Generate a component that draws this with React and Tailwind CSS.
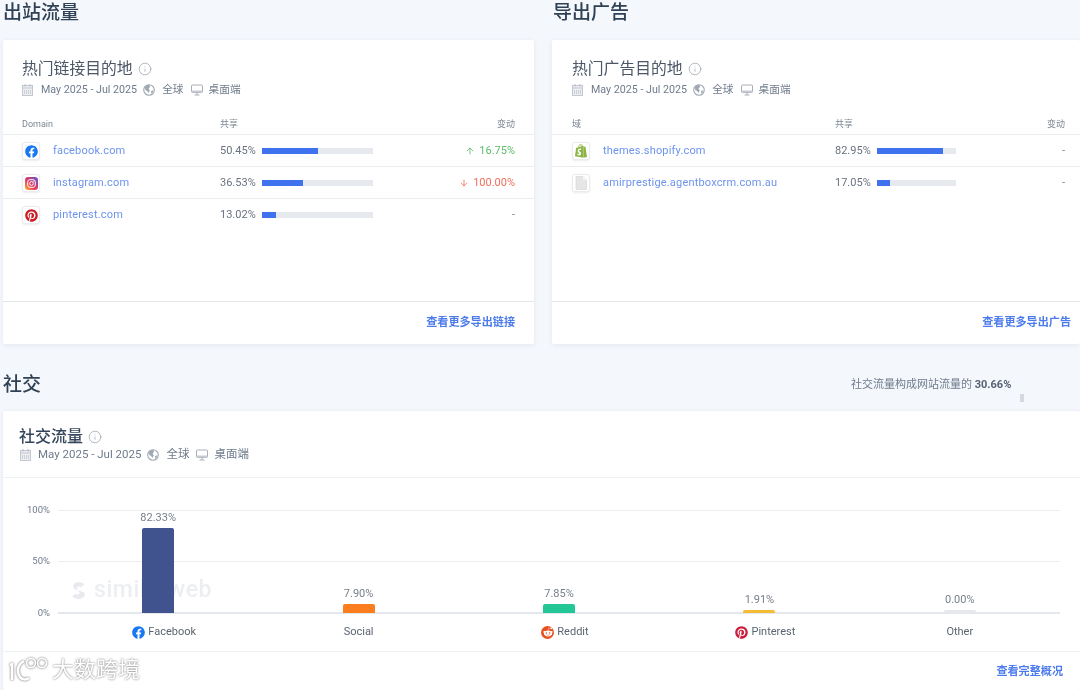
import React from 'react'
import { ArrowDown, ArrowUp, Info } from 'lucide-react'
import { FaFacebook, FaPinterest, FaRedditAlien, FaShopify } from 'react-icons/fa'

const font = { fontFamily: '"Roboto", "Noto Sans CJK SC", sans-serif' }

function InstagramIcon() {
  return (
    <svg width="13" height="13" viewBox="0 0 24 24">
      <defs>
        <linearGradient id="ig" x1="0" y1="1" x2="1" y2="0">
          <stop offset="0" stopColor="#fdb32b" />
          <stop offset="0.45" stopColor="#e8365e" />
          <stop offset="1" stopColor="#5b51d8" />
        </linearGradient>
      </defs>
      <rect width="24" height="24" rx="6" fill="url(#ig)" />
      <rect x="5" y="5" width="14" height="14" rx="4" fill="none" stroke="#fff" strokeWidth="1.8" />
      <circle cx="12" cy="12" r="3.4" fill="none" stroke="#fff" strokeWidth="1.8" />
      <circle cx="16.2" cy="7.8" r="1" fill="#fff" />
    </svg>
  )
}

function FileIcon() {
  return (
    <svg width="12" height="14" viewBox="0 0 12 14">
      <path d="M1 0.5h7l3.5 3.5v9.5h-10.500z" fill="#e6e6e6" stroke="#d4d4d4" strokeWidth="0.6" />
      <path d="M8 0.500v3.500h3.500z" fill="#f5f5f5" />
    </svg>
  )
}

function CalendarIcon() {
  return (
    <svg width="11" height="12" viewBox="0 0 11 12" className="shrink-0">
      <rect x="0.500" y="1.500" width="10" height="10" fill="#eceef1" stroke="#c3c8d0" />
      <path d="M0.500 4h10" stroke="#c3c8d0" />
      <path d="M3 0v2.500M8 0v2.500" stroke="#b4bbc6" />
      <path d="M2.500 6v4M4.500 6v4M6.500 6v4M8.500 6v4" stroke="#c3c8d0" strokeWidth="0.8" />
    </svg>
  )
}

function GlobeIcon() {
  return (
    <svg width="12" height="12" viewBox="0 0 12 12" className="shrink-0">
      <circle cx="6" cy="6" r="5.300" fill="#fff" stroke="#a0a8b3" strokeWidth="1.100" />
      <path d="M2 3c1-1.500 3-2.300 4.500-2.200L7 3 5.500 4.500 6.800 6.500 5.500 9 4.200 7 2.200 6zM8 7l2.300-.800c0 1.500-.7 2.800-1.800 3.700z" fill="#a0a8b3" />
    </svg>
  )
}

function MonitorIcon() {
  return (
    <svg width="12" height="12" viewBox="0 0 12 12" className="shrink-0">
      <rect x="0.500" y="1" width="11" height="7.500" rx="1" fill="#fff" stroke="#a8afba" />
      <rect x="1" y="6.500" width="10" height="2" fill="#c7ccd3" />
      <path d="M6 8.500v2.500M3.500 11h5" stroke="#a8afba" />
    </svg>
  )
}

function IconBox({ children }) {
  return (
    <div className="w-[18px] h-[18px] rounded-[3px] bg-white border border-[#e9ebef] shadow-[0_1px_2px_rgba(0,0,0,0.08)] flex items-center justify-center shrink-0">
      {children}
    </div>
  )
}

function MetaRow({ large }) {
  return (
    <div className={`flex items-center text-[#6f7b8c] ${large ? 'ml-[1px] text-[11.500px]' : 'text-[10.700px]'}`}>
      <CalendarIcon />
      <span className={large ? 'ml-[7px]' : 'ml-[8px]'}>May 2025 - Jul 2025</span>
      <span className={large ? 'ml-[6px]' : 'ml-[6px]'}><GlobeIcon /></span>
      <span className="ml-[7px]">全球</span>
      <span className="ml-[7px]"><MonitorIcon /></span>
      <span className={large ? 'ml-[6px]' : 'ml-[6px]'}>桌面端</span>
    </div>
  )
}

function Title({ children, className }) {
  return (
    <div className={`flex items-center ${className}`}>
      {children}
      <Info size={14} strokeWidth={1.1} className="ml-[5px] text-[#8d96a3]" />
    </div>
  )
}

function Row({ icon, domain, share, pct, change, shareX, barW, left, right }) {
  return (
    <div className={`h-[32px] pt-[1px] flex items-center border-t border-[#e9ecf1] ${left} ${right} text-[11px]`}>
      <IconBox>{icon}</IconBox>
      <span className="ml-[13px] text-[#6d93ee] tracking-[0.18px]">{domain}</span>
      <div className={`absolute flex items-center ${shareX}`}>
        <span className="w-[42px] text-[#68727f]">{share}</span>
        <div className={`h-[6px] bg-[#e6e9ee] ${barW}`}>
          <div className="h-full bg-[#3f72ee]" style={{ width: `${pct}%` }} />
        </div>
      </div>
      <div className="ml-auto">{change}</div>
    </div>
  )
}

function Dash() {
  return <span className="text-[#7b8592]">-</span>
}

function Delta({ up, value }) {
  const Arrow = up ? ArrowUp : ArrowDown
  return (
    <span className={`flex items-center gap-[4px] ${up ? 'text-[#5dbb6a]' : 'text-[#ef6f5c]'}`}>
      <Arrow size={10} strokeWidth={2} />
      {value}
    </span>
  )
}

function LinkCard({ title, domainLabel, left, right, shareX, barW, rows, link, linkPad }) {
  return (
    <div className="relative h-[304px] bg-white rounded-[2px] shadow-[0_1px_5px_rgba(40,60,90,0.08)] flex flex-col">
      <div className={`${left} pt-[18px]`}>
        <Title className="text-[15.800px] leading-[22px] text-[#4b5666]">{title}</Title>
        <div className="mt-[2px]"><MetaRow /></div>
      </div>
      <div className={`relative mt-[17px] h-[19px] flex items-center ${left} ${right} text-[9px] text-[#7c8693]`}>
        <span>{domainLabel}</span>
        <span className={`absolute ${shareX}`}>共享</span>
        <span className="ml-auto">变动</span>
      </div>
      <div className="relative">
        {rows.map((r) => (
          <Row key={r.domain} {...r} shareX={shareX} barW={barW} left={left} right={right} />
        ))}
      </div>
      <div className={`mt-auto h-[43px] border-t border-[#e3e6eb] flex items-center justify-end ${linkPad} text-[11.100px] font-semibold text-[#4c7bec]`}>
        {link}
      </div>
    </div>
  )
}

const bars = [
  { name: 'Facebook', value: '82.33%', h: 'h-[85px]', color: 'bg-[#41538e]', icon: <FaFacebook size={13} className="text-[#1877f2]" /> },
  { name: 'Social', value: '7.90%', h: 'h-[9px]', color: 'bg-[#fb7d1e]' },
  {
    name: 'Reddit',
    value: '7.85%',
    h: 'h-[9px]',
    color: 'bg-[#22c795]',
    icon: (
      <span className="w-[13px] h-[13px] rounded-full bg-[#e8501f] flex items-center justify-center">
        <FaRedditAlien size={10} className="text-white" />
      </span>
    ),
  },
  { name: 'Pinterest', value: '1.91%', h: 'h-[3px]', color: 'bg-[#f4bb35]', icon: <FaPinterest size={13} className="text-[#cb1f3d]" /> },
  { name: 'Other', value: '0.00%', h: 'h-[3px]', color: 'bg-[#e6e8ee]' },
]

function Chart() {
  return (
    <div className="relative h-[173px] pl-[55px] pr-[20px]">
      {/* grid lines sit behind the bars */}
      <div className="absolute inset-x-0 top-[32px] h-[103px] flex flex-col justify-between text-[9.500px] text-[#6f7b8c]">
        {['100%', '50%', '0%'].map((t, i) => (
          <div key={t} className="h-0 flex items-center pr-[20px]">
            <span className="w-[47px] text-right shrink-0">{t}</span>
            <div className={`ml-[8px] flex-1 ${i === 2 ? 'h-[2px] bg-[#e4e7ec]' : 'h-px bg-[#eceef2]'}`} />
          </div>
        ))}
      </div>
      <div className="absolute left-[67px] top-[95px] flex items-center gap-[7px] text-[#eceef1] text-[23px] font-medium tracking-[0.55px]">
        <svg width="17" height="17" viewBox="0 0 16 16">
          <path d="M8 0a8 8 0 0 1 5.500 2.200L10.500 5c-1.500-1-3.500-.8-4 .3-.4 1 .4 1.700 2 2.700-2.500-.3-5.500-1.500-5.500-4C3 1.500 5.500 0 8 0z" fill="#e8eaee" />
          <path d="M8 16a8 8 0 0 1-6-2.700L5 11c1.500 1 3.200.8 3.800 0 .5-.8 0-1.700-1.500-2.500 3.700 0 6.700 1 6.700 3.500 0 2.500-3.500 4-6 4z" fill="#e8eaee" />
        </svg>
        similarweb
      </div>
      <div className="relative grid grid-cols-5 h-full">
        {bars.map((b) => (
          <div key={b.name} className="flex flex-col items-center">
            <div className="h-[135px] flex flex-col items-center justify-end">
              <span className="text-[11px] leading-[12px] mb-[4px] text-[#767f8b]">{b.value}</span>
              <div className={`w-[32px] rounded-t-[2px] ${b.h} ${b.color}`} />
            </div>
            <div className={`mt-[12px] flex items-center gap-[3px] text-[11px] leading-[14px] text-[#5a6470] ${b.icon ? 'ml-[12px]' : ''}`}>
              {b.icon}
              {b.name}
            </div>
          </div>
        ))}
      </div>
    </div>
  )
}

export default function App() {
  const leftRows = [
    { icon: <FaFacebook size={13} className="text-[#1877f2]" />, domain: 'facebook.com', share: '50.45%', pct: 50.45, change: <Delta up value="16.75%" /> },
    { icon: <InstagramIcon />, domain: 'instagram.com', share: '36.53%', pct: 36.53, change: <Delta value="100.00%" /> },
    { icon: <FaPinterest size={13} className="text-[#cb1f27]" />, domain: 'pinterest.com', share: '13.02%', pct: 13.02, change: <Dash /> },
  ]
  const rightRows = [
    { icon: <FaShopify size={14} className="text-[#8db543]" />, domain: 'themes.shopify.com', share: '82.95%', pct: 82.95, change: <Dash /> },
    { icon: <FileIcon />, domain: 'amirprestige.agentboxcrm.com.au', share: '17.05%', pct: 17.05, change: <Dash /> },
  ]

  return (
    <div className="relative w-[1080px] h-[690px] overflow-hidden bg-[#f4f7fc] pl-[3px] blur-[0.4px]" style={font}>
      <div className="flex gap-[18px]">
        <div className="w-[531px] shrink-0">
          <h2 className="h-[40px] leading-[26px] text-[19px] font-medium text-[#2f4154]">出站流量</h2>
          <LinkCard
            title="热门链接目的地"
            domainLabel="Domain"
            left="pl-[19px]"
            right="pr-[19px]"
            shareX="left-[217px]"
            barW="w-[111px]"
            rows={leftRows}
            link="查看更多导出链接"
            linkPad="pr-[19px]"
          />
        </div>
        <div className="w-[528px] shrink-0">
          <h2 className="h-[40px] pl-[1px] leading-[26px] text-[19px] font-medium text-[#2f4154]">导出广告</h2>
          <LinkCard
            title="热门广告目的地"
            domainLabel="域"
            left="pl-[20px]"
            right="pr-[15px]"
            shareX="left-[283px]"
            barW="w-[79px]"
            rows={rightRows}
            link="查看更多导出广告"
            linkPad="pr-[9px]"
          />
        </div>
      </div>

      <div className="relative pt-[29px] pb-[14px] flex items-center">
        <h2 className="leading-[24px] text-[19px] font-medium text-[#2f4154]">社交</h2>
        <div className="ml-[810px] text-[11px] text-[#6f7b8c]">
          社交流量构成网站流量的 <span className="font-bold text-[#566273]">30.66%</span>
        </div>
        <div className="absolute left-[1017px] top-[50px] w-[4px] h-[8px] bg-[#d5d9df]" />
      </div>

      <div className="bg-white rounded-[2px] h-[279px] flex flex-col shadow-[0_1px_5px_rgba(40,60,90,0.08)]">
        <div className="h-[67px] pl-[16px] pt-[16px] border-b border-[#eef0f3]">
          <Title className="text-[16px] leading-[19px] font-medium text-[#33455a]">社交流量</Title>
          <MetaRow large />
        </div>
        <Chart />
        <div className="flex-1 pt-[2px] border-t border-[#eef0f3] flex items-center justify-end pr-[17px] text-[11.100px] font-semibold text-[#4c7bec]">
          查看完整概况
        </div>
      </div>

      {/* watermark over the picture */}
      <div className="absolute left-[9px] top-[655px] flex items-center gap-[3px] text-white text-[22px] leading-[30px] [text-shadow:0_0_2px_rgba(80,80,80,0.9)]">
        <svg width="40" height="30" viewBox="0 0 40 30" fill="none" stroke="#fff" strokeWidth="2.500" style={{ filter: 'drop-shadow(0 0 1px rgba(80,80,80,0.9))' }}>
          <path d="M3 8L1.500 11M3 8v17" />
          <path d="M15 6c-6 3-8 10-4 16 2 3 6 3 9 1" />
          <circle cx="22" cy="8" r="4.500" strokeWidth="1.600" />
          <circle cx="33" cy="8" r="4.500" strokeWidth="1.600" />
        </svg>
        <span>大数跨境</span>
      </div>
    </div>
  )
}
